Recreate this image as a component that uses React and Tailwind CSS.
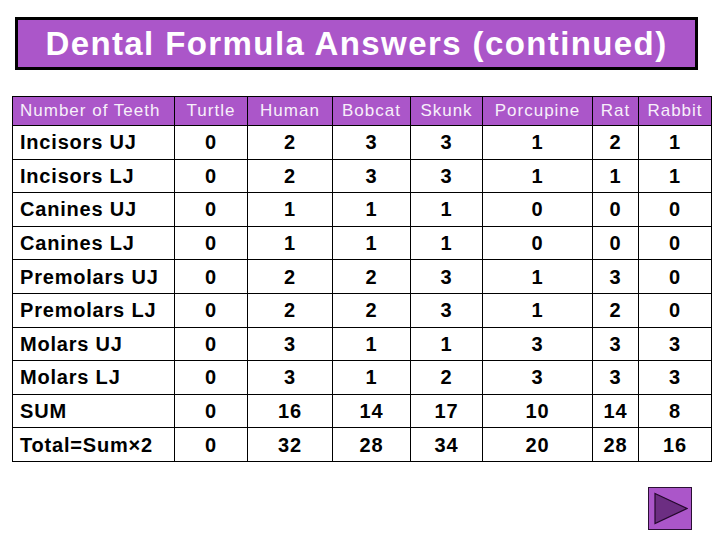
import React from "react";

const animals = ["Turtle", "Human", "Bobcat", "Skunk", "Porcupine", "Rat", "Rabbit"];
const widths = ["w-[162px]", "w-[73px]", "w-[85px]", "w-[78px]", "w-[72px]", "w-[110px]", "w-[46px]", "w-[73px]"];

const rows = [
  ["Incisors UJ", 0, 2, 3, 3, 1, 2, 1],
  ["Incisors LJ", 0, 2, 3, 3, 1, 1, 1],
  ["Canines UJ", 0, 1, 1, 1, 0, 0, 0],
  ["Canines LJ", 0, 1, 1, 1, 0, 0, 0],
  ["Premolars UJ", 0, 2, 2, 3, 1, 3, 0],
  ["Premolars LJ", 0, 2, 2, 3, 1, 2, 0],
  ["Molars UJ", 0, 3, 1, 1, 3, 3, 3],
  ["Molars LJ", 0, 3, 1, 2, 3, 3, 3],
  ["SUM", 0, 16, 14, 17, 10, 14, 8],
  ["Total=Sum×2", 0, 32, 28, 34, 20, 28, 16],
];

export default function App() {
  return (
    <div className="w-[720px] h-[540px] bg-white flex flex-col font-['Liberation_Sans',Arial,sans-serif] overflow-hidden">
      <div className="ml-[15px] mt-[17px] w-[683px] h-[53px] border-[3px] border-black bg-[#ab56c9] flex items-center justify-center">
        <h1 className="text-[33px] font-bold tracking-[1.4px] text-white leading-none">
          Dental Formula Answers (continued)
        </h1>
      </div>

      <table className="ml-[12px] mt-[26px] w-[699px] table-fixed border-collapse border border-black">
        <thead>
          <tr className="h-[29px] bg-[#ab56c9] text-[#f7f0fa] text-[17px] tracking-[1px]">
            <th className={`${widths[0]} border border-black text-left pl-[7px] font-normal`}>Number of Teeth</th>
            {animals.map((a, i) => (
              <th key={a} className={`${widths[i + 1]} border border-black text-center font-normal px-0`}>
                {a}
              </th>
            ))}
          </tr>
        </thead>
        <tbody>
          {rows.map((r) => (
            <tr key={r[0]} className="h-[33.6px] text-[20px] font-bold tracking-[0.8px] text-black">
              <td className="border border-black text-left pl-[7px] whitespace-nowrap">{r[0]}</td>
              {r.slice(1).map((v, i) => (
                <td key={i} className="border border-black text-center">{v}</td>
              ))}
            </tr>
          ))}
        </tbody>
      </table>

      <div className="flex justify-end pr-[28px] mt-[25px]">
        <button className="w-[44px] h-[43px] bg-[#ab56c9] border border-[#2a0f33] flex items-center justify-center">
          <svg width="36" height="33" viewBox="0 0 36 33">
            <polygon points="3,1.5 35,16.5 3,31.5" fill="#6c2e82" stroke="#24092c" strokeWidth="1.2" />
          </svg>
        </button>
      </div>
    </div>
  );
}
